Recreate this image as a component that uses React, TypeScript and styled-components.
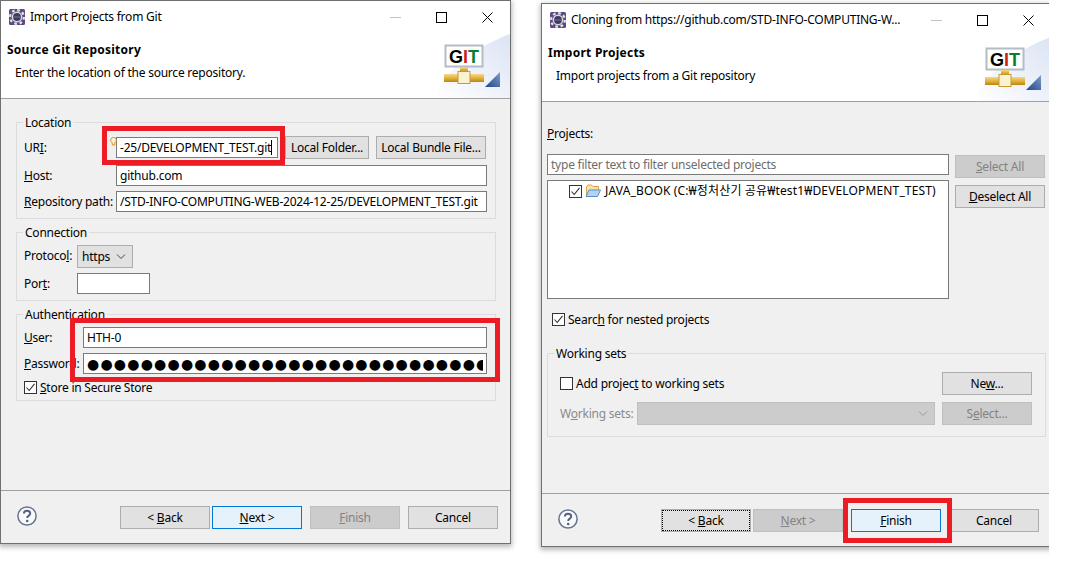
import React from "react";
import styled, { createGlobalStyle } from "styled-components";

const GlobalStyle = createGlobalStyle`
  html, body {
    margin: 0;
    padding: 0;
    background: #fff;
  }
  * {
    box-sizing: border-box;
  }
  u {
    text-underline-offset: 1px;
  }
`;

const Desktop = styled.div`
  position: relative;
  width: 1070px;
  height: 587px;
  overflow: hidden;
  background: #fff;
  color: #000;
  font-family: "Noto Sans", "Noto Sans CJK KR", sans-serif;
  font-size: 12px;
  line-height: 16px;
  letter-spacing: -0.23px;
`;

const Window = styled.section<{ $left: number; $top: number; $cropped?: boolean }>`
  position: absolute;
  left: ${(p) => p.$left}px;
  top: ${(p) => p.$top}px;
  width: 511px;
  height: 544px;
  display: flex;
  flex-direction: column;
  background: #f0f0f0;
  border: 1px solid #707070;
  box-shadow: 0 2px 5px 1px rgba(0, 0, 0, 0.28);
  clip-path: ${(p) => (p.$cropped ? "inset(-10px 3px -10px -10px)" : "none")};
`;

const TitleBar = styled.header`
  height: 32px;
  flex: none;
  display: flex;
  align-items: center;
  padding-left: 8px;
  background: #fff;
`;

const TitleText = styled.span`
  margin-left: 5px;
  flex: 1;
  white-space: nowrap;
`;

const Controls = styled.div`
  display: flex;
  flex: none;
`;

const ControlButton = styled.div`
  width: 46px;
  height: 32px;
  display: flex;
  align-items: center;
  justify-content: center;
`;

const Banner = styled.div`
  position: relative;
  height: 66px;
  flex: none;
  padding: 9px 0 0 6px;
  background: #fff;
  border-bottom: 1px solid #a0a0a0;
`;

const BannerArt = styled.svg`
  position: absolute;
  right: 0;
  top: 0;
`;

const Heading = styled.h2`
  margin: 0;
  font-size: 12px;
  line-height: 16px;
  font-weight: 700;
  letter-spacing: 0.25px;
`;

const SubHeading = styled.p`
  margin: 7px 0 0 8px;
`;

const Body = styled.main<{ $padding: string }>`
  flex: 1;
  min-height: 0;
  display: flex;
  flex-direction: column;
  padding: ${(p) => p.$padding};
`;

const Group = styled.div<{ $padding: string; $gap?: number; $top?: number }>`
  position: relative;
  display: flex;
  flex-direction: column;
  gap: ${(p) => p.$gap ?? 5}px;
  padding: ${(p) => p.$padding};
  margin-top: ${(p) => p.$top ?? 0}px;
  border: 1px solid #dcdcdc;
  & + & {
    margin-top: 13px;
  }
`;

const GroupTitle = styled.span`
  position: absolute;
  left: 6px;
  top: -8px;
  padding: 0 2px;
  background: #f0f0f0;
`;

const Row = styled.div<{ $columns: string; $height: number; $gap?: number }>`
  display: grid;
  grid-template-columns: ${(p) => p.$columns};
  column-gap: ${(p) => p.$gap ?? 0}px;
  height: ${(p) => p.$height}px;
  align-items: start;
`;

const Label = styled.label<{ $disabled?: boolean; $top?: number }>`
  display: block;
  padding-top: ${(p) => p.$top ?? 3}px;
  white-space: nowrap;
  color: ${(p) => (p.$disabled ? "#8a8a8a" : "#000")};
`;

const ProjectsLabel = styled.label`
  display: block;
`;

const Field = styled.div<{ $muted?: boolean }>`
  position: relative;
  height: 21px;
  padding: 0 3px;
  display: flex;
  align-items: center;
  background: #fff;
  border: 1px solid #7a7a7a;
  white-space: nowrap;
  overflow: hidden;
  color: ${(p) => (p.$muted ? "#6d6d6d" : "#000")};
`;

const UriWrap = styled.div`
  position: relative;
  height: 21px;
  margin-top: 1px;
`;

const Caret = styled.span`
  width: 1px;
  height: 15px;
  background: #000;
  flex: none;
`;

const Bulb = styled.svg`
  position: absolute;
  left: -6px;
  top: 0;
`;

const Bullets = styled.span`
  display: block;
  width: 398px;
  overflow: hidden;
  font-family: "DejaVu Sans", sans-serif;
  font-size: 14px;
  letter-spacing: 1.2px;
`;

const Button = styled.button<{ $kind?: "primary" | "disabled" | "focus" }>`
  width: 100%;
  height: 23px;
  padding: 1px 0 0;
  font: inherit;
  letter-spacing: inherit;
  white-space: nowrap;
  color: ${(p) => (p.$kind === "disabled" ? "#838383" : "#000")};
  background: ${(p) =>
    p.$kind === "primary" ? "#e5f1fb" : p.$kind === "disabled" ? "#cccccc" : "#e1e1e1"};
  border: 1px solid
    ${(p) => (p.$kind === "primary" ? "#0078d7" : p.$kind === "disabled" ? "#bfbfbf" : "#adadad")};
  outline: ${(p) => (p.$kind === "focus" ? "1px dotted #000" : "none")};
  outline-offset: -2px;
`;

const SelectBox = styled.div<{ $disabled?: boolean }>`
  height: 23px;
  padding: 0 6px 0 4px;
  display: flex;
  align-items: center;
  justify-content: space-between;
  background: ${(p) => (p.$disabled ? "#cccccc" : "#e1e1e1")};
  border: 1px solid ${(p) => (p.$disabled ? "#bfbfbf" : "#adadad")};
`;

const CheckRow = styled.div<{ $indent?: number; $top?: number }>`
  display: flex;
  align-items: center;
  gap: 3px;
  height: 13px;
  margin-left: ${(p) => p.$indent ?? 0}px;
  margin-top: ${(p) => p.$top ?? 0}px;
  white-space: nowrap;
`;

const CheckBox = styled.span`
  width: 13px;
  height: 13px;
  flex: none;
  display: flex;
  align-items: center;
  justify-content: center;
  background: #fff;
  border: 1px solid #333;
`;

const ProjectGrid = styled.div`
  display: grid;
  grid-template-columns: 402px 90px;
  column-gap: 6px;
  margin-top: 12px;
`;

const Stack = styled.div<{ $gap: number; $top?: number }>`
  display: flex;
  flex-direction: column;
  gap: ${(p) => p.$gap}px;
  padding-top: ${(p) => p.$top ?? 0}px;
`;

const Tree = styled.div`
  height: 119px;
  padding: 2px 0 0 21px;
  background: #fff;
  border: 1px solid #7a7a7a;
`;

const TreeItem = styled.div`
  display: flex;
  align-items: center;
  gap: 3px;
  white-space: nowrap;
`;

const TreeText = styled.span`
  margin-left: 1px;
  letter-spacing: 0.15px;
`;

const SpaceRow = styled.div`
  display: flex;
  justify-content: space-between;
  align-items: center;
  height: 23px;
`;

const ButtonSlot = styled.div`
  width: 90px;
  flex: none;
`;

const Footer = styled.footer`
  height: 53px;
  flex: none;
  display: flex;
  align-items: flex-start;
  padding: 15px 12px 0 16px;
  border-top: 1px solid #a0a0a0;
`;

const HelpIcon = styled.svg`
  display: block;
  margin-right: auto;
`;

const ButtonPair = styled.div`
  display: flex;
  gap: 2px;
`;

const ButtonGroup = styled.div`
  display: flex;
  gap: 8px;
`;

const Highlight = styled.div<{ $x: number; $y: number; $w: number; $h: number }>`
  position: absolute;
  left: ${(p) => p.$x}px;
  top: ${(p) => p.$y}px;
  width: ${(p) => p.$w}px;
  height: ${(p) => p.$h}px;
  border: 5px solid #ed1c24;
  pointer-events: none;
`;

const EclipseIcon = () => (
  <svg width="16" height="16" viewBox="0 0 16 16">
    <rect width="16" height="16" rx="1.5" fill="#5b4a86" />
    <circle cx="8" cy="8" r="6.9" fill="none" stroke="#e8e6e2" strokeWidth="2.2" strokeDasharray="2.7 2.72" />
    <circle cx="8" cy="8" r="5.4" fill="#dcdad8" />
    <circle cx="8" cy="8" r="3.9" fill="#3e3a60" />
    <path d="M4.4 8h7.2" stroke="#77739a" strokeWidth="1" />
  </svg>
);

const WindowControls = () => (
  <Controls>
    <ControlButton>
      <svg width="11" height="11" viewBox="0 0 11 11">
        <path d="M0 5.5h11" stroke="#c4c4c4" />
      </svg>
    </ControlButton>
    <ControlButton>
      <svg width="11" height="11" viewBox="0 0 11 11">
        <rect x="0.5" y="0.5" width="10" height="10" fill="none" stroke="#000" />
      </svg>
    </ControlButton>
    <ControlButton>
      <svg width="11" height="11" viewBox="0 0 11 11">
        <path d="M0.5 0.5l10 10M10.5 0.5l-10 10" stroke="#000" />
      </svg>
    </ControlButton>
  </Controls>
);

const GitBanner = () => (
  <BannerArt width="75" height="65" viewBox="0 0 75 65">
    <defs>
      <linearGradient id="swoosh" x1="0" y1="1" x2="1" y2="0">
        <stop offset="0" stopColor="#ffffff" />
        <stop offset="1" stopColor="#dbe3f4" />
      </linearGradient>
      <linearGradient id="pipe" x1="0" y1="0" x2="0" y2="1">
        <stop offset="0" stopColor="#f3d98a" />
        <stop offset="0.5" stopColor="#e3b23c" />
        <stop offset="1" stopColor="#b98514" />
      </linearGradient>
      <linearGradient id="corner" x1="0" y1="1" x2="1" y2="0">
        <stop offset="0" stopColor="#1f4788" />
        <stop offset="1" stopColor="#7f9ccb" />
      </linearGradient>
    </defs>
    <path d="M0 65C8 38 40 14 75 1V65Z" fill="url(#swoosh)" />
    <rect x="10.5" y="12.5" width="37" height="21" fill="#fff" stroke="#b4bcc4" strokeWidth="2" />
    <text x="29" y="29.5" textAnchor="middle" fontFamily="Liberation Sans, sans-serif" fontWeight="700" fontSize="18" letterSpacing="0">
      <tspan fill="#000">G</tspan>
      <tspan fill="#c81e1e">I</tspan>
      <tspan fill="#0a7d2c">T</tspan>
    </text>
    <rect x="25" y="34" width="8" height="5" fill="url(#pipe)" />
    <rect x="9" y="41" width="40" height="8" fill="url(#pipe)" />
    <rect x="23" y="38.5" width="12" height="12" fill="#fbf2d2" stroke="#c99a2e" />
    <path d="M50 54L65 39V54Z" fill="url(#corner)" />
  </BannerArt>
);

const Check = () => (
  <svg width="11" height="11" viewBox="0 0 11 11">
    <path d="M1.5 5.5L4.2 8.5L9.5 1.8" fill="none" stroke="#333" strokeWidth="1.1" />
  </svg>
);

const Chevron = ({ color }: { color: string }) => (
  <svg width="10" height="6" viewBox="0 0 10 6">
    <path d="M1 0.5L5 4.5L9 0.5" fill="none" stroke={color} />
  </svg>
);

const Help = () => (
  <HelpIcon width="20" height="20" viewBox="0 0 20 20">
    <circle cx="10" cy="10" r="9.1" fill="#f8f9fb" stroke="#66748f" strokeWidth="1.5" />
    <path
      d="M6.9 7.6C6.9 5.7 8.3 4.7 10 4.7C11.8 4.7 13.2 5.8 13.2 7.4C13.2 9.6 10.2 9.6 10.2 12"
      fill="none"
      stroke="#55637f"
      strokeWidth="2"
    />
    <circle cx="10.2" cy="15" r="1.3" fill="#55637f" />
  </HelpIcon>
);

const FolderIcon = () => (
  <svg width="16" height="14" viewBox="0 0 16 14">
    <path d="M1.5 12.5V2.5L3 1H6.5L8 2.5H13.5V6" fill="#f7e3a6" stroke="#d9a441" />
    <path d="M1 12.5L4 6H15.5L12.5 12.5Z" fill="#b4d3f2" stroke="#5b8fc9" />
  </svg>
);

const SourceWindow = () => (
  <Window $left={0} $top={0}>
    <TitleBar>
      <EclipseIcon />
      <TitleText>Import Projects from Git</TitleText>
      <WindowControls />
    </TitleBar>
    <Banner>
      <Heading>Source Git Repository</Heading>
      <SubHeading>Enter the location of the source repository.</SubHeading>
      <GitBanner />
    </Banner>
    <Body $padding="23px 14px 0 15px">
      <Group $padding="13px 8px 6px 7px">
        <GroupTitle>Location</GroupTitle>
        <Row $columns="92px 162px 7px 84px 7px 110px" $height={24}>
          <Label $top={4}>
            UR<u>I</u>:
          </Label>
          <UriWrap>
            <Field>
              -25/DEVELOPMENT_TEST.git
              <Caret />
            </Field>
            <Bulb width="7" height="10" viewBox="0 0 7 10">
              <path d="M3.5 0.5a2.7 2.7 0 0 1 1.5 5L4.6 8H2.4L2 5.5a2.7 2.7 0 0 1 1.5-5Z" fill="#fff4d8" stroke="#e08a1e" />
            </Bulb>
          </UriWrap>
          <span />
          <Button>Local Folder...</Button>
          <span />
          <Button>Local Bundle File...</Button>
        </Row>
        <Row $columns="92px 1fr" $height={21}>
          <Label>
            <u>H</u>ost:
          </Label>
          <Field>github.com</Field>
        </Row>
        <Row $columns="92px 1fr" $height={21}>
          <Label>
            <u>R</u>epository path:
          </Label>
          <Field>/STD-INFO-COMPUTING-WEB-2024-12-25/DEVELOPMENT_TEST.git</Field>
        </Row>
      </Group>
      <Group $padding="12px 8px 6px 7px">
        <GroupTitle>Connection</GroupTitle>
        <Row $columns="53px 56px" $height={23}>
          <Label>
            Protoco<u>l</u>:
          </Label>
          <SelectBox>
            https
            <Chevron color="#444" />
          </SelectBox>
        </Row>
        <Row $columns="53px 73px" $height={21}>
          <Label>
            Por<u>t</u>:
          </Label>
          <Field />
        </Row>
      </Group>
      <Group $padding="12px 8px 6px 7px">
        <GroupTitle>Authentication</GroupTitle>
        <Row $columns="59px 1fr" $height={21}>
          <Label>
            <u>U</u>ser:
          </Label>
          <Field>HTH-0</Field>
        </Row>
        <Row $columns="59px 1fr" $height={21}>
          <Label>
            <u>P</u>assword:
          </Label>
          <Field>
            <Bullets>{"●".repeat(36)}</Bullets>
          </Field>
        </Row>
        <CheckRow $top={2}>
          <CheckBox>
            <Check />
          </CheckBox>
          <span>
            <u>S</u>tore in Secure Store
          </span>
        </CheckRow>
      </Group>
    </Body>
    <Footer>
      <Help />
      <ButtonGroup>
        <ButtonPair>
          <ButtonSlot>
            <Button>
              &lt; <u>B</u>ack
            </Button>
          </ButtonSlot>
          <ButtonSlot>
            <Button $kind="primary">
              <u>N</u>ext &gt;
            </Button>
          </ButtonSlot>
        </ButtonPair>
        <ButtonSlot>
          <Button $kind="disabled">
            <u>F</u>inish
          </Button>
        </ButtonSlot>
        <ButtonSlot>
          <Button>Cancel</Button>
        </ButtonSlot>
      </ButtonGroup>
    </Footer>
  </Window>
);

const ProjectsWindow = () => (
  <Window $left={541} $top={3} $cropped>
    <TitleBar>
      <EclipseIcon />
      <TitleText>Cloning from https://github.com/STD-INFO-COMPUTING-W...</TitleText>
      <WindowControls />
    </TitleBar>
    <Banner>
      <Heading>Import Projects</Heading>
      <SubHeading>Import projects from a Git repository</SubHeading>
      <GitBanner />
    </Banner>
    <Body $padding="24px 5px 0 5px">
      <ProjectsLabel>
        <u>P</u>rojects:
      </ProjectsLabel>
      <ProjectGrid>
        <Stack $gap={5}>
          <Field $muted>type filter text to filter unselected projects</Field>
          <Tree>
            <TreeItem>
              <CheckBox>
                <Check />
              </CheckBox>
              <FolderIcon />
              <TreeText>JAVA_BOOK (C:₩정처산기 공유₩test1₩DEVELOPMENT_TEST)</TreeText>
            </TreeItem>
          </Tree>
        </Stack>
        <Stack $gap={7} $top={1}>
          <Button $kind="disabled">
            <u>S</u>elect All
          </Button>
          <Button>
            <u>D</u>eselect All
          </Button>
        </Stack>
      </ProjectGrid>
      <CheckRow $indent={5} $top={14}>
        <CheckBox>
          <Check />
        </CheckBox>
        <span>
          Searc<u>h</u> for nested projects
        </span>
      </CheckRow>
      <Group $padding="18px 13px 11px 12px" $gap={7} $top={27}>
        <GroupTitle>Working sets</GroupTitle>
        <SpaceRow>
          <CheckRow>
            <CheckBox />
            <span>
              Add projec<u>t</u> to working sets
            </span>
          </CheckRow>
          <ButtonSlot>
            <Button>
              Ne<u>w</u>...
            </Button>
          </ButtonSlot>
        </SpaceRow>
        <Row $columns="70px 298px 90px" $gap={7} $height={23}>
          <Label $disabled $top={4}>
            W<u>o</u>rking sets:
          </Label>
          <SelectBox $disabled>
            <span />
            <Chevron color="#9a9a9a" />
          </SelectBox>
          <Button $kind="disabled">
            S<u>e</u>lect...
          </Button>
        </Row>
      </Group>
    </Body>
    <Footer>
      <Help />
      <ButtonGroup>
        <ButtonPair>
          <ButtonSlot>
            <Button $kind="focus">
              &lt; <u>B</u>ack
            </Button>
          </ButtonSlot>
          <ButtonSlot>
            <Button $kind="disabled">
              <u>N</u>ext &gt;
            </Button>
          </ButtonSlot>
        </ButtonPair>
        <ButtonSlot>
          <Button $kind="primary">
            <u>F</u>inish
          </Button>
        </ButtonSlot>
        <ButtonSlot>
          <Button>Cancel</Button>
        </ButtonSlot>
      </ButtonGroup>
    </Footer>
  </Window>
);

export default function App() {
  return (
    <>
      <GlobalStyle />
      <Desktop>
        <SourceWindow />
        <ProjectsWindow />
        <Highlight $x={102} $y={126} $w={183} $h={39} />
        <Highlight $x={70} $y={318} $w={430} $h={64} />
        <Highlight $x={843} $y={498} $w={109} $h={45} />
      </Desktop>
    </>
  );
}
